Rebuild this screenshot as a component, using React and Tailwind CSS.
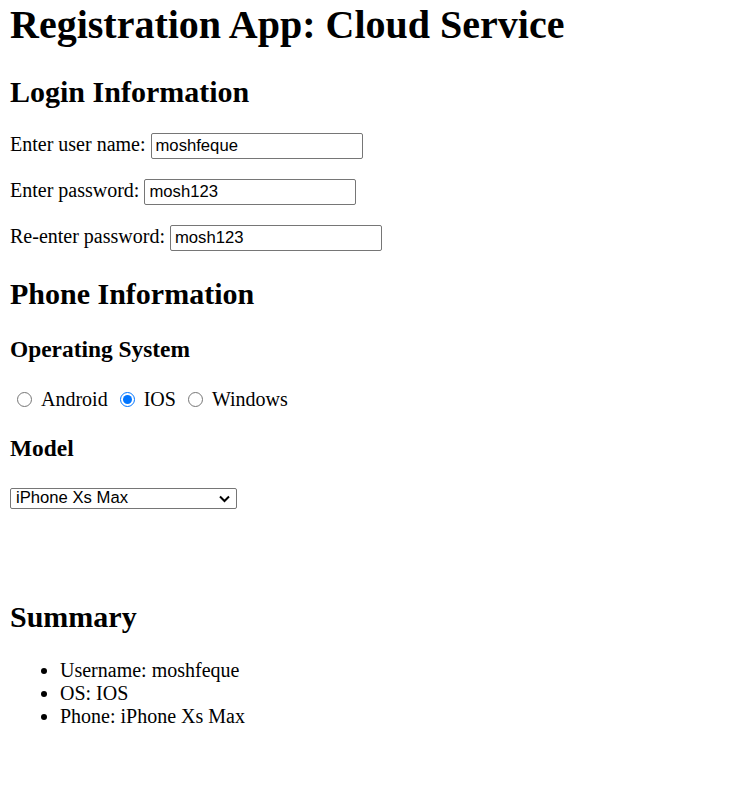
export default function App() {
  const inputCls =
    "inline-block align-baseline w-[212px] h-[26px] border border-[#767676] rounded-[2px] px-[4px] text-[16.67px] text-black bg-white outline-none";
  const inputFont = { fontFamily: '"Liberation Sans", Arial, sans-serif' };
  return (
    <div
      className="px-[10px] pt-[1px] text-[20px] leading-[normal] text-black bg-white min-h-[795px]"
      style={{ fontFamily: '"Liberation Serif", "Times New Roman", serif' }}
    >
      <h1 className="text-[40px] font-bold leading-[normal] mb-[27px]">Registration App: Cloud Service</h1>
      <h2 className="text-[30px] font-bold leading-[normal] mb-[24px]">Login Information</h2>
      <p className="mb-[20px]">
        Enter user name:{" "}
        <input className={inputCls} style={inputFont} defaultValue="moshfeque" readOnly />
      </p>
      <p className="mb-[20px]">
        Enter password:{" "}
        <input className={inputCls} style={inputFont} defaultValue="mosh123" readOnly />
      </p>
      <p className="mb-[26px]">
        Re-enter password:{" "}
        <input className={inputCls} style={inputFont} defaultValue="mosh123" readOnly />
      </p>
      <h2 className="text-[30px] font-bold leading-[normal] mb-[25px]">Phone Information</h2>
      <h3 className="text-[23.4px] font-bold leading-[normal] mb-[23px]">Operating System</h3>
      <div className="flex items-center h-[26px] mt-[1px]">
        <span className="inline-block w-[15px] h-[15px] rounded-full border border-[#767676] bg-white ml-[7px] mr-[9px]"></span>
        <span>Android</span>
        <span className="inline-flex items-center justify-center w-[15px] h-[15px] rounded-full border-[1px] border-[#0075ff] bg-white ml-[12px] mr-[9px]">
          <span className="block w-[9px] h-[9px] rounded-full bg-[#0075ff]"></span>
        </span>
        <span>IOS</span>
        <span className="inline-block w-[15px] h-[15px] rounded-full border border-[#767676] bg-white ml-[12px] mr-[9px]"></span>
        <span>Windows</span>
      </div>
      <h3 className="text-[23.4px] font-bold leading-[normal] mt-[23px] mb-[26px]">Model</h3>
      <div
        className="flex items-center justify-between w-[227px] h-[21px] border border-[#767676] rounded-[2px] pl-[5px] pr-[6px] text-[16.67px] bg-white"
        style={inputFont}
      >
        <span className="leading-none">iPhone Xs Max</span>
        <svg width="11" height="8" viewBox="0 0 11 8" className="mt-[1px]">
          <path d="M1 1.5 L5.5 6 L10 1.5" fill="none" stroke="#000" strokeWidth="2" />
        </svg>
      </div>
      <h2 className="text-[30px] font-bold leading-[normal] mt-[91px] mb-[25px]">Summary</h2>
      <ul className="list-disc pl-[50px]">
        <li>Username: moshfeque</li>
        <li>OS: IOS</li>
        <li>Phone: iPhone Xs Max</li>
      </ul>
    </div>
  );
}
